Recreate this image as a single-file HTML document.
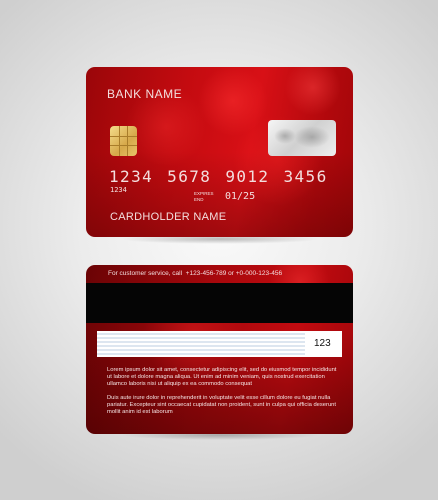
<!DOCTYPE html>
<html><head><style>
*{margin:0;padding:0;box-sizing:border-box}
body{width:438px;height:500px;overflow:hidden;background:radial-gradient(ellipse 70% 60% at 50% 45%,#fafafa 0%,#ececec 45%,#cfcfcf 100%);font-family:"Liberation Sans",sans-serif;position:relative}
.card{position:absolute;left:86px;width:267px;border-radius:9px;overflow:hidden}
.front{background:
radial-gradient(circle at 55% 20%,rgba(255,50,50,.5) 0,rgba(255,50,50,0) 35px),
radial-gradient(circle at 85% 12%,rgba(255,70,70,.45) 0,rgba(255,70,70,0) 28px),
radial-gradient(circle at 30% 35%,rgba(255,50,50,.35) 0,rgba(255,50,50,0) 40px),
radial-gradient(circle at 72% 55%,rgba(255,40,40,.35) 0,rgba(255,40,40,0) 45px),
linear-gradient(180deg,rgba(0,0,0,0) 50%,rgba(60,0,0,.35) 100%),
linear-gradient(100deg,#9a0609 0%,#c40b10 35%,#d81016 60%,#b0080c 85%,#a00609 100%)}
.back{background:
radial-gradient(circle at 80% 10%,rgba(255,60,60,.4) 0,rgba(255,60,60,0) 30px),
radial-gradient(circle at 40% 40%,rgba(255,40,40,.35) 0,rgba(255,40,40,0) 50px),
linear-gradient(180deg,rgba(0,0,0,0) 40%,rgba(50,0,0,.45) 100%),
linear-gradient(100deg,#6a0305 0%,#a8080c 45%,#c20b10 75%,#a0060a 100%)}
.shadow{position:absolute;left:120px;width:200px;height:10px;border-radius:50%;background:radial-gradient(ellipse,rgba(0,0,0,.25),rgba(0,0,0,0) 70%)}
.t{position:absolute;color:#f3dede;white-space:nowrap}
.num{font-family:"DejaVu Sans Mono",monospace}
</style></head><body>
<div class="shadow" style="top:234px"></div>
<div class="shadow" style="top:430px"></div>
<div class="card front" style="top:67px;height:170px">
 <div class="t" style="left:21px;top:20px;font-size:12px;letter-spacing:.5px">BANK NAME</div>
 <div style="position:absolute;left:24px;top:59px;width:27px;height:30px;border-radius:4px;background:linear-gradient(135deg,#f4dc8a,#d6a84a 60%,#e8c46a);">
  <div style="position:absolute;left:9px;top:0;width:9px;height:30px;border-left:1px solid #a97d2a;border-right:1px solid #a97d2a"></div>
  <div style="position:absolute;left:0;top:10px;width:27px;height:10px;border-top:1px solid #a97d2a;border-bottom:1px solid #a97d2a"></div>
 </div>
 <div style="position:absolute;left:182px;top:53px;width:68px;height:36px;border-radius:4px;background:linear-gradient(135deg,#f6f6f6,#d0d0d0 50%,#efefef);overflow:hidden">
  <div style="position:absolute;left:6px;top:8px;width:22px;height:16px;border-radius:45%;background:radial-gradient(ellipse,rgba(130,130,130,.55),rgba(130,130,130,0) 70%)"></div>
  <div style="position:absolute;left:26px;top:6px;width:36px;height:22px;border-radius:40%;background:radial-gradient(ellipse,rgba(130,130,130,.55),rgba(130,130,130,0) 70%)"></div>
 </div>
 <div class="t num" style="left:23px;top:100px;font-size:16px;letter-spacing:1.4px;word-spacing:3px">1234 5678 9012 3456</div>
 <div class="t num" style="left:24px;top:119px;font-size:7px">1234</div>
 <div class="t" style="left:108px;top:124px;font-size:4.5px;line-height:6px">EXPIRES<br>END</div>
 <div class="t num" style="left:139px;top:124px;font-size:10px">01/25</div>
 <div class="t" style="left:24px;top:144px;font-size:11px;letter-spacing:.3px">CARDHOLDER NAME</div>
</div>
<div class="card back" style="top:265px;height:169px">
 <div class="t" style="left:22px;top:5px;font-size:6.5px">For customer service, call &nbsp;+123-456-789 or +0-000-123-456</div>
 <div style="position:absolute;left:0;top:18px;width:267px;height:40px;background:#050505"></div>
 <div style="position:absolute;left:11px;top:66px;width:245px;height:26px;background:#fff">
  <div style="position:absolute;left:0;top:2px;width:208px;height:22px;background:repeating-linear-gradient(#dde6f0 0,#dde6f0 2px,#fff 2px,#fff 4px)"></div>
  <div style="position:absolute;left:217px;top:7px;font-size:10px;color:#111">123</div>
 </div>
 <div class="t" style="left:21px;top:102px;font-size:5.8px;line-height:7px;color:#f6e6e6">Lorem ipsum dolor sit amet, consectetur adipiscing elit, sed do eiusmod tempor incididunt<br>ut labore et dolore magna aliqua. Ut enim ad minim veniam, quis nostrud exercitation<br>ullamco laboris nisi ut aliquip ex ea commodo consequat</div>
 <div class="t" style="left:21px;top:130px;font-size:5.8px;line-height:7px;color:#f6e6e6">Duis aute irure dolor in reprehenderit in voluptate velit esse cillum dolore eu fugiat nulla<br>pariatur. Excepteur sint occaecat cupidatat non proident, sunt in culpa qui officia deserunt<br>mollit anim id est laborum</div>
</div>
</body></html>
